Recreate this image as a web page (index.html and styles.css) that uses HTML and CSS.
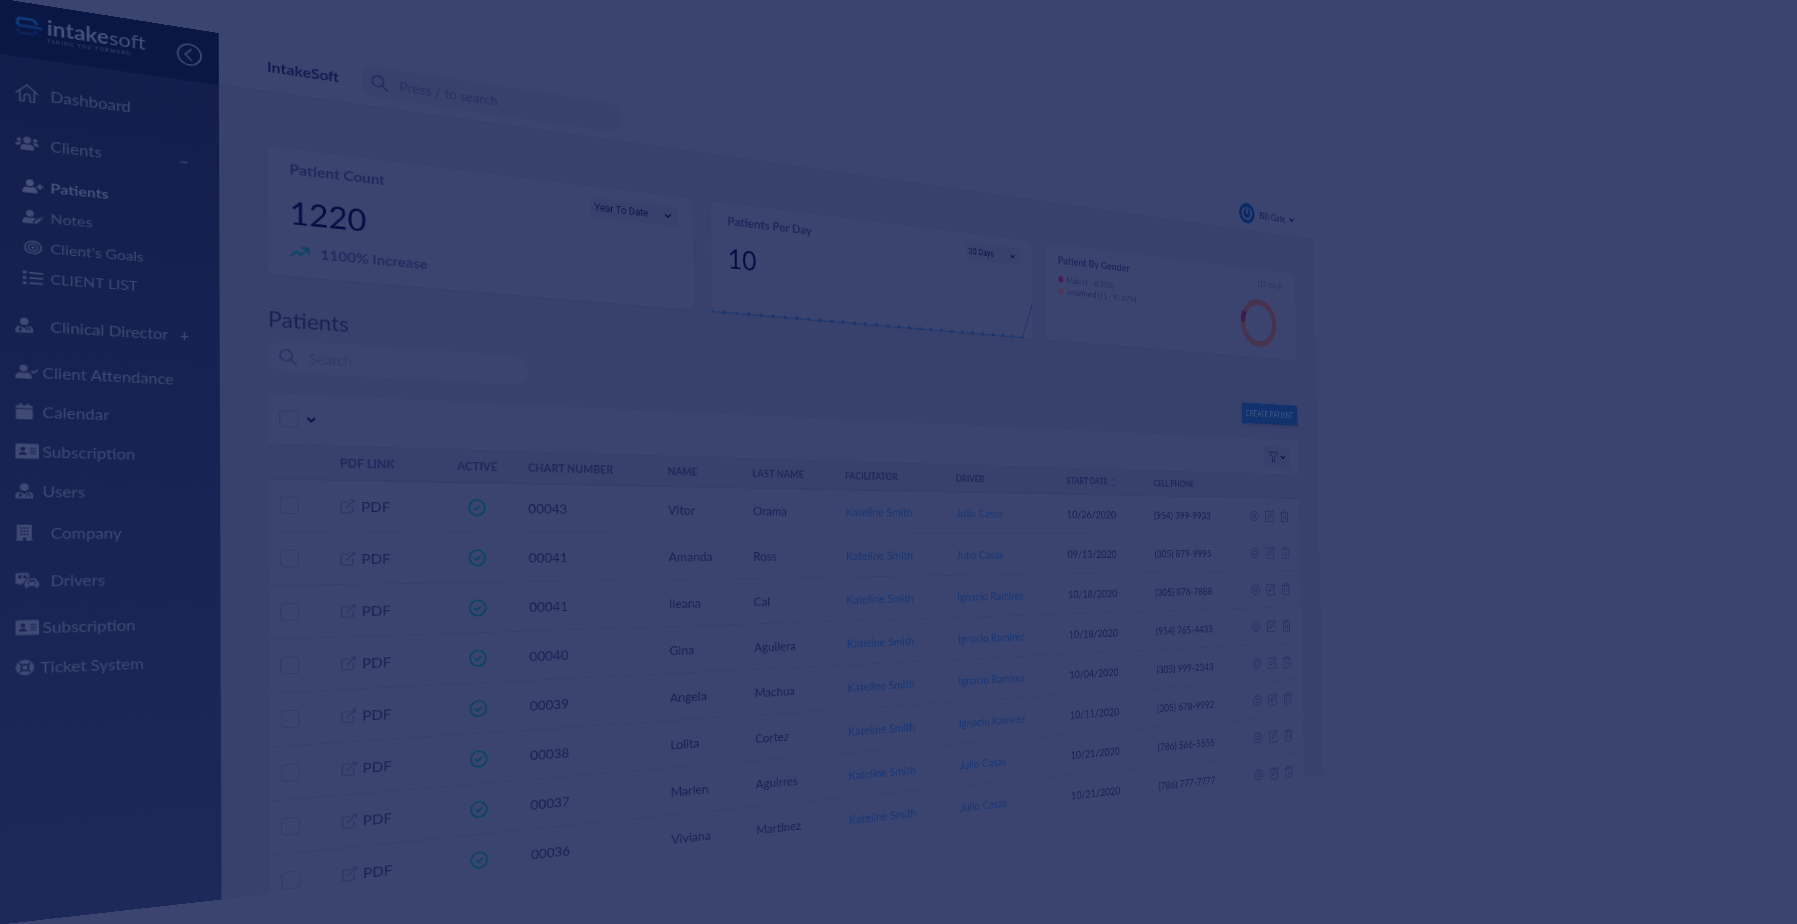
FILE: index.html
```html
<!DOCTYPE html>
<html lang="en">
<head>
<meta charset="utf-8">
<meta name="viewport" content="width=device-width, initial-scale=1">
<title>IntakeSoft</title>
<link rel="stylesheet" href="styles.css">
</head>
<body>
<svg class="sprite" aria-hidden="true">
  <symbol id="home" viewBox="0 0 24 24"><path d="M1 12 12 2l11 10M4.500 9.500V21c0 .6.400 1 1 1H9v-6c0-1.700 1.300-3 3-3s3 1.300 3 3v6h3.500c.6 0 1-.4 1-1V9.500" fill="none" stroke="currentColor" stroke-width="1.600" stroke-linecap="round" stroke-linejoin="round"/></symbol>
  <symbol id="users" viewBox="0 0 24 18"><g fill="currentColor"><circle cx="12" cy="5" r="4"/><path d="M5 17v-2c0-3 2-5 4-5 2 1 4 1 6 0 2 0 4 2 4 5v2z"/><circle cx="3.600" cy="5" r="2.300"/><circle cx="20.400" cy="5" r="2.300"/><path d="M0 12c0-2.500 1-4 3-4h1.500c.8 0 1.500.3 2 .8C5 10 4 11 3.800 12zM24 12c0-2.500-1-4-3-4h-1.500c-.8 0-1.500.3-2 .8C19 10 20 11 20.200 12z"/></g></symbol>
  <symbol id="user-plus" viewBox="0 0 24 18"><g fill="currentColor"><circle cx="8.500" cy="4.500" r="4.500"/><path d="M0 18v-2c0-3.500 2.500-6 5-6 2 1 5 1 7 0 2.500 0 5 2.500 5 6v2zM19 5h2v3h3v2h-3v3h-2v-3h-3V8h3z"/></g></symbol>
  <symbol id="user-edit" viewBox="0 0 24 18"><g fill="currentColor"><circle cx="8.500" cy="4.500" r="4.500"/><path d="M0 18v-2c0-3.500 2.500-6 5-6 2 1 5 1 7 0 1.200 0 2.300.5 3.200 1.400L12 14.500V18zM13.500 15.500l6-6 2.500 2.500-6 6h-2.500zM20.500 8.500l1-1 2.500 2.500-1 1z"/></g></symbol>
  <symbol id="user-check" viewBox="0 0 26 18"><g fill="currentColor"><circle cx="9" cy="4.500" r="4.500"/><path d="M0 18v-2c0-3.500 2.500-6 5.500-6 2 1 5 1 7 0 3 0 5.500 2.500 5.500 6v2z"/></g><path d="m17.500 7.500 2.800 2.800L25 5.500" fill="none" stroke="currentColor" stroke-width="2"/></symbol>
  <symbol id="user-md" viewBox="0 0 20 20"><path fill="currentColor" fill-rule="evenodd" d="M10 0a5 5 0 1 1 0 10A5 5 0 0 1 10 0zM0 19v-2.500c0-3 2-5 5-5.500v3a2 2 0 1 0 1.200 0v-3L10 15l3.800-4v2.500c-1.200.2-2 1-2 2.500v2h1.300v-2c0-1.500 2.800-1.500 2.800 0v2h1.300v-2c0-1.300-.8-2.300-2-2.500v-2.500c3 .5 4.800 2.500 4.800 5.500V19c0 .6-.4 1-1 1H1c-.6 0-1-.4-1-1z"/></symbol>
  <symbol id="target" viewBox="0 0 20 18"><g fill="none" stroke="currentColor" stroke-width="1.800"><ellipse cx="10" cy="9" rx="9" ry="8"/><ellipse cx="10" cy="9" rx="5" ry="4.600"/></g><circle cx="10" cy="9" r="2" fill="currentColor"/></symbol>
  <symbol id="list" viewBox="0 0 20 16"><path fill="currentColor" d="M0 0h3.500v3.500H0zM0 6.200h3.500v3.500H0zM0 12.500h3.500V16H0zM6.500 1H20v2H6.500zM6.500 7H20v2H6.500zM6.500 13H20v2H6.500z"/></symbol>
  <symbol id="calendar" viewBox="0 0 18 20"><path fill="currentColor" d="M4 0h2.500v2.500h5V0H14v2.500h2.200c1 0 1.800.8 1.800 1.800V6H0V4.300c0-1 .8-1.800 1.800-1.800H4zM0 7.300h18v10.900c0 1-.8 1.800-1.800 1.800H1.800c-1 0-1.800-.8-1.800-1.800z"/></symbol>
  <symbol id="id-card" viewBox="0 0 24 18"><path fill="currentColor" fill-rule="evenodd" d="M1.500 0h21c.8 0 1.500.7 1.500 1.500v15c0 .8-.7 1.500-1.500 1.500h-21C.7 18 0 17.300 0 16.500v-15C0 .7.700 0 1.500 0zM7.500 4a2.500 2.500 0 1 0 0 5 2.500 2.500 0 0 0 0-5zM3.500 13.500h8c0-2-1.300-3.300-3-3.300h-2c-1.700 0-3 1.300-3 3.300zM15 5v1.200h6V5zM15 8v1.200h6V8zM15 11v1.200h6V11z"/></symbol>
  <symbol id="building" viewBox="0 0 18 20"><path fill="currentColor" fill-rule="evenodd" d="M1 0h16v18.500h1V20h-7v-4H7.500v4H0v-1.500h1zM4.500 3v2h2V3zM8 3v2h2V3zM11.500 3v2h2V3zM4.500 7v2h2V7zM8 7v2h2V7zM11.500 7v2h2V7zM4.500 11v2h2v-2zM8 11v2h2v-2zM11.500 11v2h2v-2z"/></symbol>
  <symbol id="cars" viewBox="0 0 26 20"><path fill="currentColor" fill-rule="evenodd" d="M2 0h11c1.200 0 2 .8 2 2v3.500c-2 .5-3 1.500-3.500 3L10.500 11C9 11.500 8.500 12.500 8.500 14H6v1.500H3V14H1c-.6 0-1-.4-1-1V2C0 .9.900 0 2 0zM3 3v4h3.500V3zM8.500 3v4h3.500V3zM15 7h6c1 0 1.800.6 2.200 1.500l1.200 3c1 .3 1.600 1 1.600 2V17h-1v2.500h-3V17h-8v2.500h-3V17h-1v-3.500c0-1 .6-1.700 1.600-2l1.200-3C13.200 7.600 14 7 15 7zM15 9l-1 2.500h8L21 9zM13 13v1.500h2V13zM21 13v1.500h2V13z"/></symbol>
  <symbol id="ring" viewBox="0 0 20 20"><circle cx="10" cy="10" r="9.800" fill="currentColor"/><g class="ring-lines" fill="none" stroke-width="2"><circle cx="10" cy="10" r="3.800"/><path d="M4 4l2.500 2.500M16 4l-2.500 2.500M4 16l2.500-2.500M16 16l-2.500-2.500"/></g></symbol>
  <symbol id="search" viewBox="0 0 18 18"><g fill="none" stroke="currentColor" stroke-width="1.600" stroke-linecap="round"><circle cx="7" cy="7" r="6"/><path d="m11.500 11.500 5.500 5.500"/></g></symbol>
  <symbol id="chevron" viewBox="0 0 10 6"><path d="m1 1 4 4 4-4" fill="none" stroke="currentColor" stroke-width="1.800"/></symbol>
  <symbol id="trend" viewBox="0 0 20 12"><path d="m1 11 6-6 4 4 7-7M12 1h7v7" fill="none" stroke="currentColor" stroke-width="1.800"/></symbol>
  <symbol id="external" viewBox="0 0 16 16"><path d="M9 3H2.500C1.700 3 1 3.700 1 4.500v9c0 .8.700 1.500 1.500 1.500h9c.8 0 1.500-.7 1.500-1.500V8M11 1h4v4M15 1 6 10" fill="none" stroke="currentColor" stroke-width="1.200"/></symbol>
  <symbol id="check" viewBox="0 0 20 20"><g fill="none" stroke="currentColor" stroke-width="1.900"><circle cx="10" cy="10" r="8.900"/><path d="m6.500 10 2.500 2.500 4.500-4.500"/></g></symbol>
  <symbol id="eye" viewBox="0 0 18 18"><g fill="none" stroke="currentColor" stroke-width="1.300"><path d="M1 9c2-4.500 5-7 8-7s6 2.500 8 7c-2 4.500-5 7-8 7s-6-2.500-8-7z"/><circle cx="9" cy="9" r="2.800"/></g></symbol>
  <symbol id="edit" viewBox="0 0 18 18"><path d="M11 2H3C2 2 1.500 2.700 1.500 3.500v12c0 .8.700 1.500 1.500 1.500h11.500c.8 0 1.500-.7 1.500-1.500V8M6 12l1-3.500L14.500 1 17 3.500 9.500 11z" fill="none" stroke="currentColor" stroke-width="1.300"/></symbol>
  <symbol id="trash" viewBox="0 0 18 18"><path d="M1 4h16M3 4v11.500c0 .8.700 1.500 1.500 1.500h9c.8 0 1.500-.7 1.500-1.500V4M6 4V2.500C6 1.700 6.500 1 7.500 1h3c1 0 1.500.7 1.500 1.500V4M7 7.500v6M11 7.500v6" fill="none" stroke="currentColor" stroke-width="1.300"/></symbol>
  <symbol id="filter" viewBox="0 0 18 18"><path d="M1 1h16v2l-6 7v5l-4 2v-7L1 3z" fill="none" stroke="currentColor" stroke-width="1.500" stroke-linejoin="round"/></symbol>
  <symbol id="sort" viewBox="0 0 10 16"><path d="m1 5 4-4 4 4M1 11l4 4 4-4" fill="none" stroke="currentColor" stroke-width="1.200"/></symbol>
</svg>

<div class="app">
  <aside class="sidebar">
    <div class="brand">
      <svg class="brand-mark" viewBox="0 0 26 20" aria-hidden="true"><g fill="none" stroke-width="3"><path class="mark-mid" d="M2 10h15c3 0 5-.5 8 1.500"/><path class="mark-light" d="M2 9.500V5c0-2 1-3 3-3h10c3 0 4 1.500 5 5"/><path class="mark-dark" d="M2 13c0 3 1 5 4 5h8c3 0 5-1.500 6-5"/></g></svg>
      <div class="brand-text">
        <div class="brand-name"><b>intake</b>soft</div>
        <div class="brand-tag">TAKING YOU FORWARD</div>
      </div>
      <button class="collapse" type="button" aria-label="Collapse menu"><svg viewBox="0 0 24 24"><g fill="none" stroke="currentColor" stroke-width="1.500"><circle cx="12" cy="12" r="11"/><path d="m14 6-6 6 6 6"/></g></svg></button>
    </div>
    <nav class="menu">
      <a class="item roomy" href="#"><svg class="icon tall"><use href="#home"/></svg>Dashboard</a>
      <a class="item roomy" href="#"><svg class="icon"><use href="#users"/></svg>Clients<span class="toggle">−</span></a>
      <div class="submenu">
        <a class="subitem current" href="#"><svg class="icon"><use href="#user-plus"/></svg>Patients</a>
        <a class="subitem" href="#"><svg class="icon"><use href="#user-edit"/></svg>Notes</a>
        <a class="subitem" href="#"><svg class="icon"><use href="#target"/></svg>Client's Goals</a>
        <a class="subitem" href="#"><svg class="icon"><use href="#list"/></svg>CLIENT LIST</a>
      </div>
      <a class="item roomy" href="#"><svg class="icon slim"><use href="#user-md"/></svg>Clinical Director<span class="toggle">+</span></a>
      <a class="item" href="#"><svg class="icon"><use href="#user-check"/></svg>Client Attendance</a>
      <a class="item" href="#"><svg class="icon slim"><use href="#calendar"/></svg>Calendar</a>
      <a class="item" href="#"><svg class="icon"><use href="#id-card"/></svg>Subscription</a>
      <a class="item" href="#"><svg class="icon slim"><use href="#user-md"/></svg>Users</a>
      <a class="item indent" href="#"><svg class="icon slim"><use href="#building"/></svg>Company</a>
      <a class="item roomy" href="#"><svg class="icon"><use href="#cars"/></svg>Drivers</a>
      <a class="item" href="#"><svg class="icon"><use href="#id-card"/></svg>Subscription</a>
      <a class="item" href="#"><svg class="icon ring"><use href="#ring"/></svg>Ticket System</a>
    </nav>
  </aside>

  <div class="page">
    <header class="topbar">
      <strong class="site">IntakeSoft</strong>
      <label class="pill pill-top"><svg class="glass"><use href="#search"/></svg><input type="text" placeholder="Press / to search" aria-label="Global search"></label>
      <button class="account" type="button">
        <svg class="avatar" viewBox="0 0 32 32"><circle cx="16" cy="16" r="16" fill="currentColor"/><g class="avatar-lines" fill="none" stroke-width="3"><path d="M12 8a9 9 0 1 0 8 0M16 6v11"/></g></svg>
        Bill Gate<svg class="chev"><use href="#chevron"/></svg>
      </button>
    </header>

    <main class="content">
      <section class="cards">
        <article class="card">
          <div class="card-main">
            <h2>Patient Count</h2>
            <p class="figure">1220</p>
            <p class="trend"><svg><use href="#trend"/></svg>1100% Increase</p>
          </div>
          <label class="picker"><select aria-label="Patient count range"><option>Year To Date</option></select><svg class="chev"><use href="#chevron"/></svg></label>
        </article>
        <article class="card">
          <div class="card-main">
            <h2>Patients Per Day</h2>
            <p class="figure">10</p>
          </div>
          <label class="picker picker-short"><select aria-label="Patients per day range"><option>30 Days</option></select><svg class="chev"><use href="#chevron"/></svg></label>
          <svg class="spark" viewBox="0 0 487 50" preserveAspectRatio="none" aria-hidden="true"><path d="M0 49H470L487 1" fill="none" stroke="currentColor" stroke-width="1.200"/><path d="M0 48.500H471" fill="none" stroke="currentColor" stroke-width="4" stroke-dasharray="4 12.800" stroke-dashoffset="2"/><path d="M486 1v6" stroke="currentColor" stroke-width="2"/></svg>
        </article>
        <article class="card">
          <div class="card-main">
            <h2>Patient By Gender</h2>
            <ul class="legend"><li class="male">Male (1 - 8.33%)</li><li class="other">undefined (11 - 91.67%)</li></ul>
          </div>
          <div class="gender">
            <span>(12 total)</span>
            <svg viewBox="0 0 75 75" aria-hidden="true"><g fill="none" stroke-width="9"><circle class="arc-other" cx="37.500" cy="37.500" r="33"/><path class="arc-male" d="M4.500 37.500A33 33 0 0 1 8.900 21"/></g></svg>
          </div>
        </article>
      </section>

      <h1>Patients</h1>
      <div class="actions">
        <label class="pill"><svg class="glass"><use href="#search"/></svg><input type="text" placeholder="Search" aria-label="Search patients"></label>
        <button class="create" type="button">CREATE PATIENT</button>
      </div>

      <section class="panel">
        <div class="toolbar">
          <input type="checkbox" aria-label="Select all"><svg class="chev chev-big"><use href="#chevron"/></svg>
          <button class="filter" type="button" aria-label="Filter"><svg class="funnel"><use href="#filter"/></svg><svg class="chev"><use href="#chevron"/></svg></button>
        </div>
        <table>
          <colgroup><col class="c-pick"><col class="c-pdf"><col class="c-active"><col class="c-chart"><col class="c-name"><col class="c-last"><col class="c-fac"><col class="c-driver"><col class="c-start"><col class="c-cell"><col></colgroup>
          <thead><tr><th></th><th>PDF LINK</th><th>ACTIVE</th><th>CHART NUMBER</th><th>NAME</th><th>LAST NAME</th><th>FACILITATOR</th><th>DRIVER</th><th>START DATE <svg class="sort"><use href="#sort"/></svg></th><th>CELL PHONE</th><th></th></tr></thead>
          <tbody>
            <tr><td><input type="checkbox" aria-label="Select Vitor Orama"></td><td><a class="pdf" href="#"><svg><use href="#external"/></svg>PDF</a></td><td><svg class="tick"><use href="#check"/></svg></td><td>00043</td><td>Vitor</td><td>Orama</td><td><a href="#">Kateline Smith</a></td><td><a href="#">Julio Casas</a></td><td>10/26/2020</td><td>(954) 399-9933</td><td><div class="tools"><button type="button" aria-label="View"><svg><use href="#eye"/></svg></button><button type="button" aria-label="Edit"><svg><use href="#edit"/></svg></button><button type="button" aria-label="Delete"><svg><use href="#trash"/></svg></button></div></td></tr>
            <tr><td><input type="checkbox" aria-label="Select Amanda Ross"></td><td><a class="pdf" href="#"><svg><use href="#external"/></svg>PDF</a></td><td><svg class="tick"><use href="#check"/></svg></td><td>00041</td><td>Amanda</td><td>Ross</td><td><a href="#">Kateline Smith</a></td><td><a href="#">Julio Casas</a></td><td>09/13/2020</td><td>(305) 879-9995</td><td><div class="tools"><button type="button" aria-label="View"><svg><use href="#eye"/></svg></button><button type="button" aria-label="Edit"><svg><use href="#edit"/></svg></button><button type="button" aria-label="Delete"><svg><use href="#trash"/></svg></button></div></td></tr>
            <tr><td><input type="checkbox" aria-label="Select Ileana Cal"></td><td><a class="pdf" href="#"><svg><use href="#external"/></svg>PDF</a></td><td><svg class="tick"><use href="#check"/></svg></td><td>00041</td><td>Ileana</td><td>Cal</td><td><a href="#">Kateline Smith</a></td><td><a href="#">Ignacio Ramirez</a></td><td>10/18/2020</td><td>(305) 876-7888</td><td><div class="tools"><button type="button" aria-label="View"><svg><use href="#eye"/></svg></button><button type="button" aria-label="Edit"><svg><use href="#edit"/></svg></button><button type="button" aria-label="Delete"><svg><use href="#trash"/></svg></button></div></td></tr>
            <tr><td><input type="checkbox" aria-label="Select Gina Aguilera"></td><td><a class="pdf" href="#"><svg><use href="#external"/></svg>PDF</a></td><td><svg class="tick"><use href="#check"/></svg></td><td>00040</td><td>Gina</td><td>Aguilera</td><td><a href="#">Kateline Smith</a></td><td><a href="#">Ignacio Ramirez</a></td><td>10/18/2020</td><td>(954) 765-4433</td><td><div class="tools"><button type="button" aria-label="View"><svg><use href="#eye"/></svg></button><button type="button" aria-label="Edit"><svg><use href="#edit"/></svg></button><button type="button" aria-label="Delete"><svg><use href="#trash"/></svg></button></div></td></tr>
            <tr><td><input type="checkbox" aria-label="Select Angela Machua"></td><td><a class="pdf" href="#"><svg><use href="#external"/></svg>PDF</a></td><td><svg class="tick"><use href="#check"/></svg></td><td>00039</td><td>Angela</td><td>Machua</td><td><a href="#">Kateline Smith</a></td><td><a href="#">Ignacio Ramirez</a></td><td>10/04/2020</td><td>(305) 999-2343</td><td><div class="tools"><button type="button" aria-label="View"><svg><use href="#eye"/></svg></button><button type="button" aria-label="Edit"><svg><use href="#edit"/></svg></button><button type="button" aria-label="Delete"><svg><use href="#trash"/></svg></button></div></td></tr>
            <tr><td><input type="checkbox" aria-label="Select Lolita Cortez"></td><td><a class="pdf" href="#"><svg><use href="#external"/></svg>PDF</a></td><td><svg class="tick"><use href="#check"/></svg></td><td>00038</td><td>Lolita</td><td>Cortez</td><td><a href="#">Kateline Smith</a></td><td><a href="#">Ignacio Ramirez</a></td><td>10/11/2020</td><td>(305) 678-9992</td><td><div class="tools"><button type="button" aria-label="View"><svg><use href="#eye"/></svg></button><button type="button" aria-label="Edit"><svg><use href="#edit"/></svg></button><button type="button" aria-label="Delete"><svg><use href="#trash"/></svg></button></div></td></tr>
            <tr><td><input type="checkbox" aria-label="Select Marlen Aguirres"></td><td><a class="pdf" href="#"><svg><use href="#external"/></svg>PDF</a></td><td><svg class="tick"><use href="#check"/></svg></td><td>00037</td><td>Marlen</td><td>Aguirres</td><td><a href="#">Kateline Smith</a></td><td><a href="#">Julio Casas</a></td><td>10/21/2020</td><td>(786) 566-5555</td><td><div class="tools"><button type="button" aria-label="View"><svg><use href="#eye"/></svg></button><button type="button" aria-label="Edit"><svg><use href="#edit"/></svg></button><button type="button" aria-label="Delete"><svg><use href="#trash"/></svg></button></div></td></tr>
            <tr><td><input type="checkbox" aria-label="Select Viviana Martinez"></td><td><a class="pdf" href="#"><svg><use href="#external"/></svg>PDF</a></td><td><svg class="tick"><use href="#check"/></svg></td><td>00036</td><td>Viviana</td><td>Martinez</td><td><a href="#">Kateline Smith</a></td><td><a href="#">Julio Casas</a></td><td>10/21/2020</td><td>(786) 777-7777</td><td><div class="tools"><button type="button" aria-label="View"><svg><use href="#eye"/></svg></button><button type="button" aria-label="Edit"><svg><use href="#edit"/></svg></button><button type="button" aria-label="Delete"><svg><use href="#trash"/></svg></button></div></td></tr>
          </tbody>
        </table>
      </section>
    </main>
  </div>
</div>
</body>
</html>
```
FILE: styles.css
```css
:root {
  --white: #3a446f;
  --grey: #38416c;
  --line: #343e6a;
  --ink: #192255;
  --ink-strong: #050e44;
  --ink-soft: #1f285c;
  --icon: #263063;
  --side-text: #3f4974;
  --link: #173777;
  --green: #074463;
}

* { box-sizing: border-box; }

body {
  margin: 0;
  overflow: hidden;
  background: var(--white);
  color: var(--ink);
  font-family: Lato, "Open Sans", sans-serif;
  font-size: 16px;
}

h1, h2, p, ul { margin: 0; padding: 0; }
a { color: inherit; text-decoration: none; }
button, input, select { font: inherit; color: inherit; margin: 0; padding: 0; border: 0; background: none; }
svg { display: block; flex: none; }
.sprite { position: absolute; width: 0; height: 0; }

/* The whole dashboard leans away from the viewer on its right side */
.app {
  display: flex;
  width: 100%;
  height: 100vh;
  overflow: hidden;
  transform-origin: 0 0;
  transform: matrix3d(1.18625, 0.187017, 0, 0.00034697, 0, 0.989177, 0, -0.00001407, 0, 0, 1, 0, 0, -1.5, 0, 1);
}

/* Sidebar */
.sidebar {
  flex: none;
  width: 197px;
  background: linear-gradient(#121d4c, #1c2959);
  color: var(--side-text);
}
.brand {
  display: flex;
  align-items: center;
  gap: 3px;
  height: 56px;
  padding: 0 16px 0 13px;
  background: #0a1644;
}
.brand-mark { width: 24px; height: 20px; align-self: flex-start; margin-top: 14px; }
.mark-light { stroke: #103b79; }
.mark-mid { stroke: #0d3270; }
.mark-dark { stroke: #0a225a; }
.brand-text { color: #45507c; margin-bottom: 6px; }
.brand-name { font-size: 20px; line-height: 22px; }
.brand-tag { font-size: 5px; line-height: 6px; font-weight: 700; letter-spacing: 1px; white-space: nowrap; color: #333d6a; }
.collapse { margin-left: auto; color: #414b77; }
.collapse svg { width: 24px; height: 24px; }

.menu { display: flex; flex-direction: column; padding-top: 12px; font-size: 15px; }
.item { display: flex; align-items: center; gap: 3px; height: 40px; padding: 0 29px 0 13px; white-space: nowrap; }
.roomy { margin: 4px 0 7px; }
.indent { margin: 2px 0 4px; }
.roomy, .indent { gap: 10px; }
.icon { width: 20px; height: 16px; }
.icon.tall { height: 20px; }
.icon.slim { width: 15px; margin-right: 5px; }
.icon.ring { width: 16px; margin-right: 2px; }
.ring-lines { stroke: #182455; }
.toggle { margin-left: auto; font-weight: 700; }
.submenu { margin-bottom: 9px; font-size: 14px; }
.subitem { display: flex; align-items: center; gap: 6px; height: 31px; padding-left: 19px; }
.subitem .icon { width: 18px; height: 14px; }
.current { color: #46507b; font-weight: 700; }

/* Top bar */
.page { flex: 1; min-width: 0; background: var(--grey); }
.topbar {
  display: flex;
  align-items: center;
  height: 56px;
  padding: 0 43px 0 47px;
  background: var(--white);
  border-bottom: 1px solid var(--line);
}
.site { width: 96px; font-size: 16px; color: #121b50; }
.pill {
  display: flex;
  align-items: center;
  gap: 12px;
  width: 281px;
  height: 35px;
  padding: 0 11px;
  border-radius: 18px;
  background: var(--white);
  color: var(--icon);
}
.pill-top { width: 300px; background: var(--grey); color: #1f295c; }
.pill input { flex: 1; min-width: 0; outline: 0; font-size: 15px; }
.pill input::placeholder { color: #303a67; opacity: 1; }
.pill-top input::placeholder { color: #26305f; }
.glass { width: 18px; height: 18px; }
.account { display: flex; align-items: center; gap: 10px; margin-left: auto; font-size: 15px; }
.account .chev { margin-left: -2px; }
.avatar { width: 32px; height: 32px; color: #0b2b66; }
.avatar-lines { stroke: var(--white); }
.chev { width: 10px; height: 6px; color: var(--ink-strong); }

/* Cards */
.content { padding: 59px 43px 0 47px; }
.cards { display: grid; grid-template-columns: repeat(3, 1fr); gap: 24px; }
.card {
  position: relative;
  display: flex;
  justify-content: space-between;
  align-items: flex-start;
  height: 140px;
  padding: 13px 20px 0 22px;
  border-radius: 6px;
  background: var(--white);
  box-shadow: 0 1px 3px #353f6a;
}
h2 { font-size: 16px; line-height: 18px; color: var(--ink-soft); }
.figure { margin-top: 18px; font-size: 34px; line-height: 42px; color: var(--ink-strong); }
.trend { display: flex; align-items: center; gap: 11px; margin-top: 12px; font-weight: 700; line-height: 20px; color: #222c60; }
.trend svg { width: 20px; height: 12px; color: var(--green); }
.picker {
  position: relative;
  display: flex;
  align-items: center;
  width: 111px;
  height: 24px;
  padding: 0 8px 0 5px;
  border-radius: 2px;
  background: var(--grey);
  color: #0e174c;
  font-family: Roboto, sans-serif;
  font-size: 12px;
}
.picker-short { width: 91px; }
.picker select { flex: 1; min-width: 0; appearance: none; }
.picker .chev { width: 9px; }
.spark { position: absolute; left: 0; bottom: -1px; width: 100%; height: 50px; overflow: visible; color: #163572; }
.legend { list-style: none; margin-top: 11px; font-size: 12px; line-height: 17px; color: #232d5e; }
.legend li { display: flex; align-items: center; gap: 6px; }
.legend li::before { content: ""; width: 9px; height: 9px; border-radius: 50%; background: #4d3555; }
.legend .male::before { background: #441f50; }
.gender { display: grid; justify-items: end; padding-right: 8px; font-size: 13px; line-height: 18px; color: #2a3462; }
.gender svg { width: 75px; height: 75px; margin: 17px 14px 0 0; }
.arc-other { stroke: #47334d; }
.arc-male { stroke: #3d1d4d; }

/* Patients list */
h1 { margin-top: 32px; font-size: 23px; line-height: 32px; font-weight: 400; }
.actions { display: flex; justify-content: space-between; align-items: center; margin: 7px 0 23px; }
.create {
  height: 32px;
  padding: 0 8px;
  background: #11326d;
  box-shadow: 0 2px 4px #2c3662;
  color: #3b5486;
  font-size: 13px;
}
.panel { border-radius: 6px 6px 0 0; background: var(--white); }
.toolbar { display: flex; align-items: center; gap: 8px; height: 55px; padding: 0 16px 0 11px; }
.chev-big { width: 10px; height: 7px; }
.filter { display: flex; align-items: center; justify-content: center; gap: 6px; width: 58px; height: 33px; margin: 0 0 0 auto; border-radius: 3px; background: var(--grey); }
.funnel { width: 18px; height: 18px; }
input[type="checkbox"] {
  display: block;
  width: 19px;
  height: 19px;
  appearance: none;
  border: 1px solid #313b67;
  border-radius: 4px;
}
table { width: 100%; table-layout: fixed; border-collapse: collapse; }
.c-pick { width: 72px; }
.c-pdf { width: 126px; }
.c-active { width: 81px; }
.c-chart { width: 172px; }
.c-name { width: 113px; }
.c-last { width: 132px; }
.c-fac { width: 171px; }
.c-driver { width: 187px; }
.c-start { width: 160px; }
.c-cell { width: 190px; }
th {
  height: 37px;
  padding: 0;
  border-top: 1px solid var(--line);
  border-bottom: 2px solid var(--line);
  background: var(--grey);
  color: #1e285b;
  font-size: 13px;
  text-align: left;
  white-space: nowrap;
}
.sort { display: inline-block; width: 10px; height: 14px; margin-left: 2px; vertical-align: middle; color: var(--icon); }
td { height: 58px; padding: 0; border-bottom: 1px solid #353f6a; white-space: nowrap; }
td:first-child { padding-left: 11px; }
td a { color: var(--link); }
td a.pdf { display: flex; align-items: center; gap: 6px; color: var(--ink); }
.pdf svg { width: 16px; height: 16px; color: #2a3464; }
.tick { width: 20px; height: 20px; margin-left: 12px; color: var(--green); }
.tools { display: flex; gap: 12px; color: var(--icon); }
.tools svg { width: 20px; height: 20px; }
```
